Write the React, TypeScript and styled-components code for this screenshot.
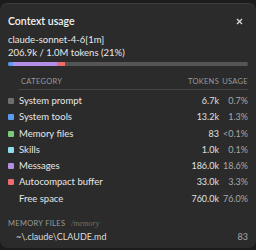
import React from "react";
import styled, { createGlobalStyle } from "styled-components";

const Global = createGlobalStyle`
  html, body { margin: 0; padding: 0; background: #1c1c1d; }
  body { font-family: "Lato", "Noto Sans", sans-serif; -webkit-font-smoothing: antialiased; }
`;

const Page = styled.div`
  width: 256px;
  height: 250px;
  padding-top: 3px;
  box-sizing: border-box;
  overflow: hidden;
`;

const Panel = styled.div`
  height: 245px;
  box-sizing: border-box;
  background: #2b2b2b;
  border-top: 1px solid #3d3d40;
  border-radius: 8px;
  padding: 8px 8px 0 8px;
  color: #e6e6e6;
  display: flex;
  flex-direction: column;
`;

const TitleRow = styled.div`
  display: flex;
  align-items: center;
  justify-content: space-between;
  height: 18px;
  flex: none;
`;

const Title = styled.div`
  font-size: 10.5px;
  line-height: 14px;
  font-weight: 600;
  color: #f2f2f2;
`;

const Close = styled.button`
  background: none;
  border: none;
  padding: 0;
  margin-right: 5px;
  width: 7px;
  height: 7px;
  display: flex;
  color: #d8d8d8;
`;

const Model = styled.div`
  margin-top: 4px;
  font-size: 9.5px;
  line-height: 12px;
  color: #e8e8e8;
`;

const Totals = styled.div`
  font-size: 9.5px;
  line-height: 12px;
  margin-top: 1px;
  color: #e8e8e8;
`;

const Bar = styled.div`
  margin-top: 3px;
  height: 4px;
  flex: none;
  border-radius: 2px;
  background: #555;
  display: flex;
  overflow: hidden;
`;

const Seg = styled.div<{ $c: string }>`
  background: ${(p) => p.$c};
  height: 100%;
`;

const Table = styled.div`
  margin-top: 11px;
  padding-left: 10px;
  display: grid;
  grid-template-columns: 1fr 40px 29px;
`;

const Head = styled.div<{ $right?: boolean }>`
  font-size: 7.5px;
  line-height: 10px;
  letter-spacing: 0.3px;
  color: #9a9a9a;
  text-transform: uppercase;
  text-align: ${(p) => (p.$right ? "right" : "left")};
  padding: 0 0 2px ${(p) => (p.$right ? "0" : "3px")};
  border-bottom: 1px solid #444;
`;

const Name = styled.div`
  display: flex;
  align-items: center;
  gap: 5px;
  height: 16.25px;
  line-height: 16px;
  font-size: 9.5px;
  color: #e6e6e6;
  margin-left: -10px;
`;

const Swatch = styled.span<{ $c: string }>`
  width: 6px;
  height: 6px;
  border-radius: 1px;
  background: ${(p) => p.$c};
  flex: none;
`;

const Num = styled.div<{ $dim?: boolean }>`
  height: 16.25px;
  line-height: 16px;
  text-align: right;
  font-size: 9px;
  color: ${(p) => (p.$dim ? "#a8a8a8" : "#e0e0e0")};
`;

const FirstRowPad = styled.div`
  grid-column: 1 / -1;
  height: 3px;
`;

const MemHead = styled.div`
  margin-top: 12px;
  display: flex;
  align-items: baseline;
  gap: 6px;
  font-size: 7.5px;
  line-height: 10px;
  letter-spacing: 0.3px;
  color: #9a9a9a;
  text-transform: uppercase;
`;

const MemSub = styled.span`
  font-family: "Liberation Serif", serif;
  font-style: italic;
  text-transform: none;
  letter-spacing: 0;
  font-size: 8px;
  color: #6f6f6f;
`;

const MemRow = styled.div`
  display: flex;
  justify-content: space-between;
  padding-left: 8px;
  margin-top: 2px;
  font-size: 9px;
  line-height: 12px;
  color: #dcdcdc;
`;

const MemCount = styled.span`
  color: #a8a8a8;
`;

const rows = [
  { name: "System prompt", c: "#6e6e6e", t: "6.7k", u: "0.7%" },
  { name: "System tools", c: "#5a9cf2", t: "13.2k", u: "1.3%" },
  { name: "Memory files", c: "#7cc97a", t: "83", u: "<0.1%" },
  { name: "Skills", c: "#8fdcea", t: "1.0k", u: "0.1%" },
  { name: "Messages", c: "#b48ee6", t: "186.0k", u: "18.6%" },
  { name: "Autocompact buffer", c: "#ee6b6e", t: "33.0k", u: "3.3%" },
  { name: "Free space", c: "transparent", t: "760.0k", u: "76.0%" },
];

export default function App() {
  return (
    <Page>
      <Global />
      <Panel>
        <TitleRow>
          <Title>Context usage</Title>
          <Close aria-label="Close">
            <svg width="7" height="7" viewBox="0 0 7 7">
              <path d="M1 1L6 6M6 1L1 6" stroke="currentColor" strokeWidth="1.3" />
            </svg>
          </Close>
        </TitleRow>
        <Model>claude-sonnet-4-6[1m]</Model>
        <Totals>206.9k / 1.0M tokens (21%)</Totals>
        <Bar>
          <Seg $c="#5a9cf2" style={{ width: "2%" }} />
          <Seg $c="#b48ee6" style={{ width: "18.6%" }} />
          <Seg $c="#ee6b6e" style={{ width: "3.3%" }} />
        </Bar>
        <Table>
          <Head>Category</Head>
          <Head $right>Tokens</Head>
          <Head $right>Usage</Head>
          <FirstRowPad />
          {rows.map((r) => (
            <React.Fragment key={r.name}>
              <Name>
                <Swatch $c={r.c} />
                {r.name}
              </Name>
              <Num>{r.t}</Num>
              <Num $dim>{r.u}</Num>
            </React.Fragment>
          ))}
        </Table>
        <MemHead>
          Memory files <MemSub>/memory</MemSub>
        </MemHead>
        <MemRow>
          <span>~\.claude\CLAUDE.md</span>
          <MemCount>83</MemCount>
        </MemRow>
      </Panel>
    </Page>
  );
}
